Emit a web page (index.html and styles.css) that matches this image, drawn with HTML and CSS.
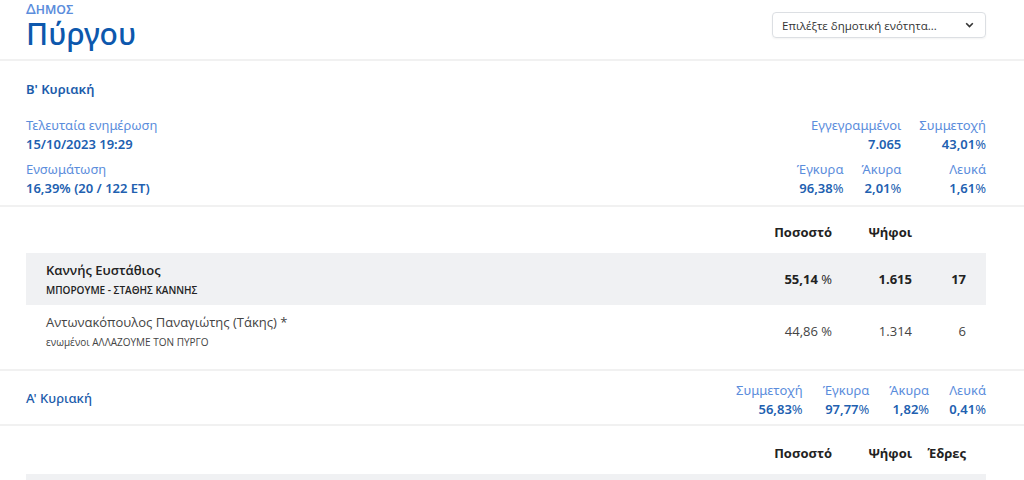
FILE: index.html
```html
<!DOCTYPE html>
<html lang="el">
<head>
<meta charset="utf-8">
<link rel="stylesheet" href="styles.css">
</head>
<body>
<header class="top">
  <div class="wrap top-inner">
    <div class="muni">
      <div class="muni-kind">Δημος</div>
      <h1 class="muni-name">Πύργου</h1>
    </div>
    <div class="select">
      <span>Επιλέξτε δημοτική ενότητα...</span>
      <svg width="9" height="6" viewBox="0 0 9 6"><path d="M1.2 1.2 L4.5 4.5 L7.8 1.2" fill="none" stroke="#333" stroke-width="1.6"/></svg>
    </div>
  </div>
</header>

<section class="band">
  <div class="wrap round">
    <h2 class="round-title">Β' Κυριακή</h2>
    <div class="round-body">
      <div class="info">
        <div class="stat">
          <div class="lbl">Τελευταία ενημέρωση</div>
          <div class="val">15/10/2023 19:29</div>
        </div>
        <div class="stat">
          <div class="lbl">Ενσωμάτωση</div>
          <div class="val">16,39% (20 / 122 ET)</div>
        </div>
      </div>
      <div class="grid3">
        <div class="stat r span2">
          <div class="lbl">Εγγεγραμμένοι</div>
          <div class="val">7.065</div>
        </div>
        <div class="stat r">
          <div class="lbl">Συμμετοχή</div>
          <div class="val">43,01<span class="pc">%</span></div>
        </div>
        <div class="stat r">
          <div class="lbl">Έγκυρα</div>
          <div class="val">96,38<span class="pc">%</span></div>
        </div>
        <div class="stat r">
          <div class="lbl">Άκυρα</div>
          <div class="val">2,01<span class="pc">%</span></div>
        </div>
        <div class="stat r">
          <div class="lbl">Λευκά</div>
          <div class="val">1,61<span class="pc">%</span></div>
        </div>
      </div>
    </div>
  </div>
</section>

<section class="band">
  <div class="wrap results">
    <div class="row head">
      <div></div>
      <div class="num">Ποσοστό</div>
      <div class="num">Ψήφοι</div>
      <div class="num"></div>
    </div>
    <div class="row cand win">
      <div class="who">
        <div class="name">Καννής Ευστάθιος</div>
        <div class="party">ΜΠΟΡΟΥΜΕ - ΣΤΑΘΗΣ ΚΑΝΝΗΣ</div>
      </div>
      <div class="num">55,14 <span class="pc">%</span></div>
      <div class="num">1.615</div>
      <div class="num">17</div>
    </div>
    <div class="row cand">
      <div class="who">
        <div class="name">Αντωνακόπουλος Παναγιώτης (Τάκης) *</div>
        <div class="party">ενωμένοι ΑΛΛΑΖΟΥΜΕ ΤΟΝ ΠΥΡΓΟ</div>
      </div>
      <div class="num">44,86 <span class="pc">%</span></div>
      <div class="num">1.314</div>
      <div class="num">6</div>
    </div>
  </div>
</section>

<section class="band">
  <div class="wrap round2">
    <h2 class="round-title2">Α' Κυριακή</h2>
    <div class="flat">
      <div class="stat r">
        <div class="lbl">Συμμετοχή</div>
        <div class="val">56,83<span class="pc">%</span></div>
      </div>
      <div class="stat r">
        <div class="lbl">Έγκυρα</div>
        <div class="val">97,77<span class="pc">%</span></div>
      </div>
      <div class="stat r">
        <div class="lbl">Άκυρα</div>
        <div class="val">1,82<span class="pc">%</span></div>
      </div>
      <div class="stat r">
        <div class="lbl">Λευκά</div>
        <div class="val">0,41<span class="pc">%</span></div>
      </div>
    </div>
  </div>
</section>

<section class="last">
  <div class="wrap results">
    <div class="row head">
      <div></div>
      <div class="num">Ποσοστό</div>
      <div class="num">Ψήφοι</div>
      <div class="num">Έδρες</div>
    </div>
    <div class="row cand win"></div>
  </div>
</section>
</body>
</html>
```

FILE: styles.css
```css
* { box-sizing: border-box; }
html, body { margin: 0; padding: 0; background: #fff; }
body {
  font-family: "Noto Sans", "Open Sans", sans-serif;
  color: #333;
  width: 1024px;
  height: 480px;
  overflow: hidden;
}
h1, h2 { margin: 0; font-weight: normal; }

.wrap { margin-left: 26px; width: 960px; }

.top { height: 61px; border-bottom: 2px solid #f1f1f1; }
.top-inner { display: flex; justify-content: space-between; align-items: flex-start; }
.muni-kind {
  font-size: 15px; line-height: 17px; color: #5b8ddc;
  font-variant: small-caps; font-weight: 500;
}
.muni-name {
  font-size: 30px; line-height: 34px; color: #0d58ad; font-weight: 500;
}
.select {
  margin-top: 12px; width: 214px; height: 26px;
  border: 1px solid #dcdfe3; border-radius: 4px;
  display: flex; align-items: center; justify-content: space-between;
  padding: 0 11px 0 9px;
  font-family: "Open Sans", sans-serif; font-size: 11.5px; color: #333;
  box-shadow: 0 1px 2px rgba(0,0,0,0.05);
}

.band { border-bottom: 2px solid #f1f1f1; }

.round { padding: 18px 0 7px; }
.round-title { font-size: 13px; line-height: 20px; color: #1c5cab; font-weight: 600; }
.round-body { display: flex; justify-content: space-between; margin-top: 17px; }
.info { display: flex; flex-direction: column; gap: 6px; }
.stat .lbl { font-size: 13px; line-height: 19px; color: #5b8ddc; }
.stat .val { font-size: 13px; line-height: 19px; color: #2160b0; font-weight: 600; }
.stat .val .pc { font-weight: normal; }
.stat.r { text-align: right; }

.grid3 {
  display: grid; grid-template-columns: auto auto auto;
  column-gap: 18px; row-gap: 6px;
}
.span2 { grid-column: 1 / span 2; }

.results { padding-top: 16px; padding-bottom: 12px; font-family: "Open Sans", sans-serif; }
.row {
  display: grid; grid-template-columns: 1fr 100px 80px 54px;
  padding: 0 20px; align-items: center;
}
.row.head { height: 30px; font-size: 13px; font-weight: 700; color: #222; align-items: start; }
.row .num { text-align: right; }
.row.cand { height: 52px; font-size: 13px; color: #444; }
.row.win { background: #f0f1f3; color: #222; font-weight: 700; }
.row.win .name { font-weight: 600; }
.row.win .pc { font-weight: normal; }
.row .name { font-size: 13px; line-height: 18px; }
.row .party { font-size: 10px; line-height: 14px; margin-top: 4px; }
.row.win .party { font-weight: 600; }

.round2 { display: flex; justify-content: space-between; align-items: center; height: 53px; }
.round-title2 { font-size: 13px; color: #1c5cab; font-weight: 500; padding-top: 0; }
.flat { display: flex; gap: 20px; padding-top: 4px; }

.last .results { padding-top: 18px; }
```
